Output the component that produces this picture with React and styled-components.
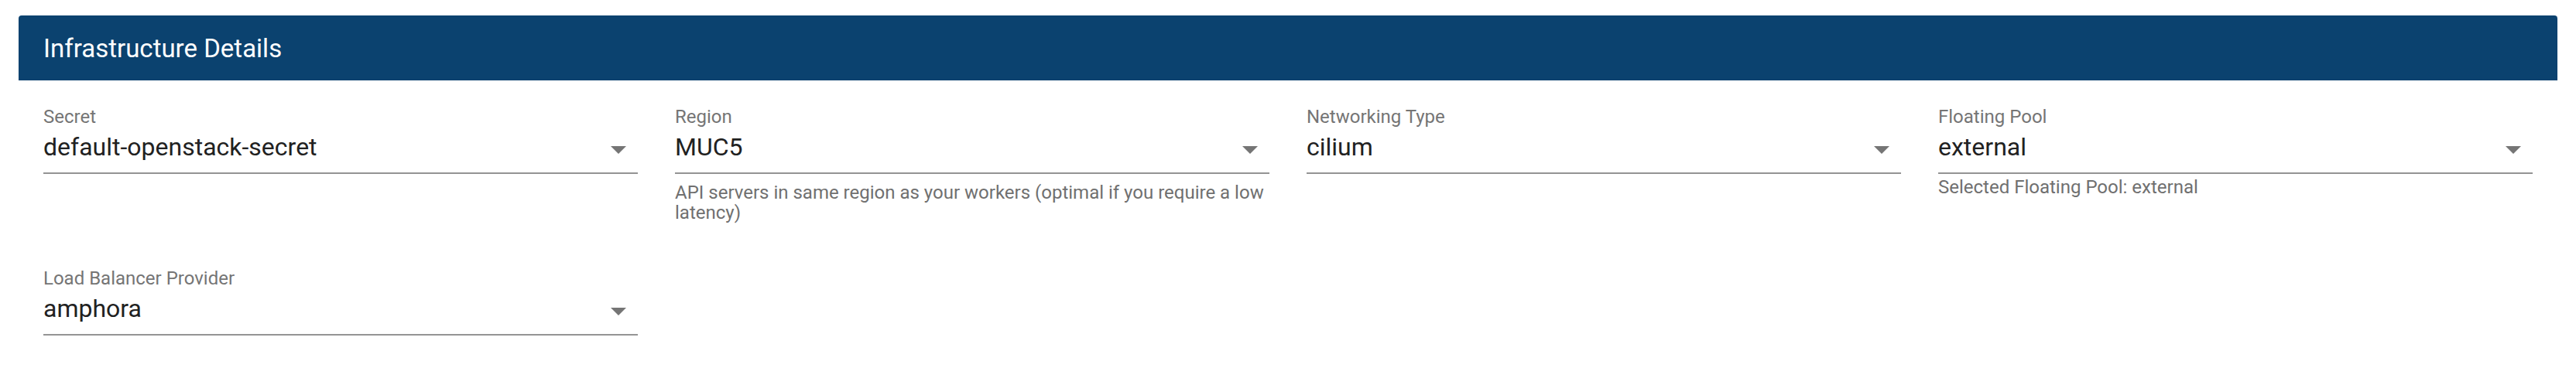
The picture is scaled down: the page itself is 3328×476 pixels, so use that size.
import styled, { createGlobalStyle } from "styled-components";

const GlobalStyle = createGlobalStyle`
  body {
    margin: 0;
    background: #ffffff;
    font-family: Roboto, "Helvetica Neue", Arial, sans-serif;
  }
`;

const Page = styled.div`
  padding: 20px 24px 0;
`;

const Card = styled.section`
  display: flex;
  flex-direction: column;
  background: #ffffff;
`;

const CardHeader = styled.header`
  display: flex;
  align-items: center;
  height: 84px;
  padding: 0 32px;
  background: #0b426f;
  border-radius: 4px 4px 0 0;
  color: #ffffff;
  font-size: 33px;
  font-weight: 400;
`;

const CardBody = styled.div`
  display: grid;
  grid-template-columns: repeat(4, 1fr);
  column-gap: 48px;
  row-gap: 58px;
  padding: 33px 32px 0;
`;

const Field = styled.div`
  display: flex;
  flex-direction: column;
  min-width: 0;
`;

const Label = styled.label`
  font-size: 24px;
  line-height: 28px;
  color: #757575;
`;

const Control = styled.div`
  display: flex;
  align-items: center;
  margin-top: 5px;
  padding-bottom: 13px;
  border-bottom: 2px solid #949494;
`;

const Value = styled.span`
  flex: 1;
  font-size: 32px;
  line-height: 40px;
  color: #212121;
  white-space: nowrap;
  overflow: hidden;
  text-overflow: ellipsis;
`;

// select arrow, drawn as a css triangle
const Arrow = styled.span`
  width: 0;
  height: 0;
  margin: 8px 15px 0 16px;
  border-left: 10px solid transparent;
  border-right: 10px solid transparent;
  border-top: 10px solid #757575;
`;

const Hint = styled.div`
  margin-top: ${(p) => p.$offset}px;
  font-size: 24px;
  line-height: 26px;
  color: #707070;
`;

const fields = [
  { label: "Secret", value: "default-openstack-secret" },
  {
    label: "Region",
    value: "MUC5",
    hint: "API servers in same region as your workers (optimal if you require a low latency)",
    offset: 11,
  },
  { label: "Networking Type", value: "cilium" },
  {
    label: "Floating Pool",
    value: "external",
    hint: "Selected Floating Pool: external",
    offset: 4,
  },
  { label: "Load Balancer Provider", value: "amphora" },
];

function SelectField({ label, value, hint, offset }) {
  return (
    <Field>
      <Label>{label}</Label>
      <Control>
        <Value>{value}</Value>
        <Arrow />
      </Control>
      {hint && <Hint $offset={offset}>{hint}</Hint>}
    </Field>
  );
}

export default function App() {
  return (
    <>
      <GlobalStyle />
      <Page>
        <Card>
          <CardHeader>Infrastructure Details</CardHeader>
          <CardBody>
            {fields.map((f) => (
              <SelectField key={f.label} {...f} />
            ))}
          </CardBody>
        </Card>
      </Page>
    </>
  );
}
